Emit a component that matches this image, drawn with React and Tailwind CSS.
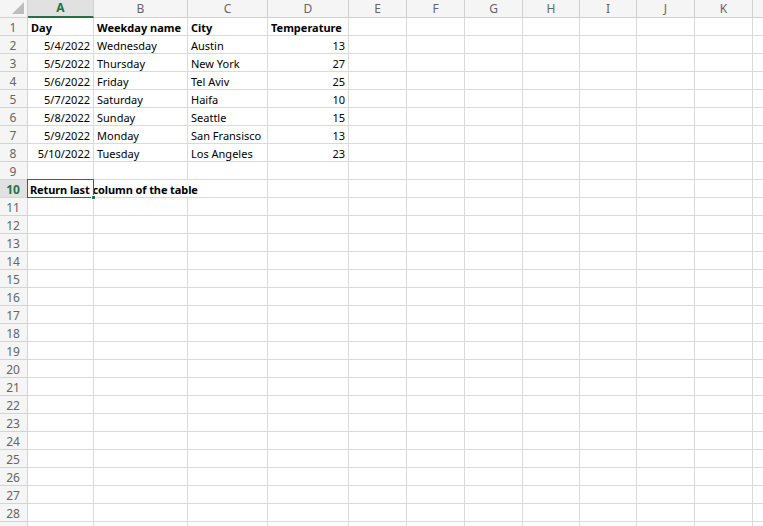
import React from "react";

const cols = [
  { l: "A", w: "w-[66px]" },
  { l: "B", w: "w-[94px]" },
  { l: "C", w: "w-[80px]" },
  { l: "D", w: "w-[81px]" },
  { l: "E", w: "w-[58px]" },
  { l: "F", w: "w-[58px]" },
  { l: "G", w: "w-[58px]" },
  { l: "H", w: "w-[57px]" },
  { l: "I", w: "w-[57px]" },
  { l: "J", w: "w-[58px]" },
  { l: "K", w: "w-[58px]" },
  { l: "", w: "w-[40px]" },
];

const data = [
  [{ t: "Day", b: true }, { t: "Weekday name", b: true }, { t: "City", b: true }, { t: "Temperature", b: true }],
  [{ t: "5/4/2022", r: true }, { t: "Wednesday" }, { t: "Austin" }, { t: "13", r: true }],
  [{ t: "5/5/2022", r: true }, { t: "Thursday" }, { t: "New York" }, { t: "27", r: true }],
  [{ t: "5/6/2022", r: true }, { t: "Friday" }, { t: "Tel Aviv" }, { t: "25", r: true }],
  [{ t: "5/7/2022", r: true }, { t: "Saturday" }, { t: "Haifa" }, { t: "10", r: true }],
  [{ t: "5/8/2022", r: true }, { t: "Sunday" }, { t: "Seattle" }, { t: "15", r: true }],
  [{ t: "5/9/2022", r: true }, { t: "Monday" }, { t: "San Fransisco" }, { t: "13", r: true }],
  [{ t: "5/10/2022", r: true }, { t: "Tuesday" }, { t: "Los Angeles" }, { t: "23", r: true }],
];

function Row({ n }) {
  const sel = n === 10;
  const rowData = data[n - 1] || [];
  return (
    <div className="flex h-[18px] shrink-0">
      <div
        className={
          "w-[28px] shrink-0 border-r border-b border-[#d4d4d4] flex items-center justify-center pt-[2px] pr-[1px] text-[12px] " +
          (sel ? "bg-[#e1e1e1] text-[#217346] font-bold border-r-[#217346]" : "bg-[#f5f5f5] text-[#666666]")
        }
      >
        {n <= 28 ? n : ""}
      </div>
      {cols.map((c, i) => {
        const cell = rowData[i];
        const hideRight = sel && i === 1;
        return (
          <div
            key={i}
            className={
              c.w +
              " shrink-0 border-b border-[#dadada] relative flex items-center px-[3px] pt-[2px] leading-[15px] " +
              (hideRight ? "" : "border-r ") +
              (cell && cell.r ? "justify-end" : "")
            }
          >
            {cell && (
              <span className={"whitespace-nowrap " + (cell.b ? "font-bold" : "")}>{cell.t}</span>
            )}
            {sel && i === 0 && (
              <>
                <span className="absolute left-[2px] top-[2px] leading-[15px] whitespace-nowrap font-bold tracking-[-0.1px] z-10">
                  Return last column of the table
                </span>
                <div className="absolute -left-[1px] -top-[1px] -right-[1px] -bottom-[1px] border border-[#217346] z-20" />
                <div className="absolute -right-[3px] -bottom-[3px] w-[5px] h-[5px] bg-[#217346] border border-white z-30" />
              </>
            )}
          </div>
        );
      })}
    </div>
  );
}

export default function App() {
  const rows = Array.from({ length: 29 }, (_, i) => i + 1);
  return (
    <div className="w-[763px] h-[526px] overflow-hidden bg-white text-[11px] text-black font-['Noto_Sans',sans-serif]">
      <div className="flex h-[18px] shrink-0">
        <div className="w-[28px] shrink-0 bg-[#f5f5f5] border-r border-b border-[#d0d0d0] relative">
          <div className="absolute right-[3px] bottom-[3px] w-0 h-0 border-l-[12px] border-l-transparent border-b-[12px] border-b-[#bdbdbd]" />
        </div>
        {cols.map((c, i) => (
          <div
            key={i}
            className={
              c.w +
              " shrink-0 border-r flex items-center justify-center text-[12px] " +
              (i === 0
                ? "bg-[#e1e1e1] text-[#217346] font-bold border-b-2 border-b-[#217346] border-r-[#d0d0d0]"
                : "bg-[#f5f5f5] text-[#666666] border-b border-[#d0d0d0]")
            }
          >
            {c.l}
          </div>
        ))}
      </div>
      {rows.map((n) => (
        <Row key={n} n={n} />
      ))}
    </div>
  );
}
